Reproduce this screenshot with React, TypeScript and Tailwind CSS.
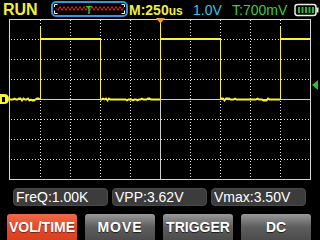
import React from "react";

function rng(seed: number) {
  let s = seed;
  return () => {
    s = (s * 1103515245 + 12345) & 0x7fffffff;
    return s / 0x7fffffff;
  };
}

function noisy(x0: number, x1: number, seed: number) {
  const r = rng(seed);
  const pts: string[] = [];
  for (let x = x0; x <= x1; x += 1.5) {
    const v = r();
    let y = 99.5;
    if (v > 0.8) y = 98.5;
    else if (v < 0.15) y = 100.5;
    pts.push(`${x.toFixed(1)},${y}`);
  }
  return pts.join(" ");
}

function Scope() {
  const Y = "#f8f238";
  const vx = [40, 70, 100, 130, 190, 220, 250, 280];
  const hy = [39, 59, 79, 119, 139, 159];
  return (
    <svg width="320" height="166" viewBox="0 18 320 166" className="block">
      {vx.map((x) => (
        <line key={"v" + x} x1={x + 0.5} y1={20} x2={x + 0.5} y2={179} stroke="#e6e6e6" strokeDasharray="1 2" />
      ))}
      {hy.map((y) => (
        <line key={"h" + y} x1={11} y1={y + 0.5} x2={310} y2={y + 0.5} stroke="#e6e6e6" strokeDasharray="1 2" />
      ))}
      <line x1={160.5} y1={20} x2={160.5} y2={179} stroke="#cfcfcf" />
      <line x1={10} y1={99.5} x2={311} y2={99.5} stroke="#cfcfcf" />
      <rect x={9.5} y={19.5} width={301} height={160} fill="none" stroke="#d6d6d6" />

      {/* trace */}
      <polyline points={noisy(10, 40, 7)} fill="none" stroke={Y} strokeWidth={1.8} />
      <polyline points={noisy(100, 160, 19)} fill="none" stroke={Y} strokeWidth={1.8} />
      <polyline points={noisy(220, 280, 33)} fill="none" stroke={Y} strokeWidth={1.8} />
      <line x1={40} y1={39} x2={100} y2={39} stroke={Y} strokeWidth={2} />
      <line x1={160} y1={39} x2={220} y2={39} stroke={Y} strokeWidth={2} />
      <line x1={280} y1={39} x2={310} y2={39} stroke={Y} strokeWidth={2} />
      <line x1={40.5} y1={27} x2={40.5} y2={100} stroke={Y} />
      <line x1={100.5} y1={38} x2={100.5} y2={100} stroke={Y} />
      <line x1={160.5} y1={22} x2={160.5} y2={100} stroke={Y} />
      <line x1={220.5} y1={38} x2={220.5} y2={100} stroke={Y} />
      <line x1={280.5} y1={27} x2={280.5} y2={100} stroke={Y} />

      {/* trigger marker */}
      <polygon points="156,18 165,18 160.5,23.5" fill="#f0a030" />
      {/* channel marker */}
      <path d="M0 94 H4 Q9 94 9 99 Q9 104 4 104 H0 Z" fill={Y} />
      <rect x={2} y={97} width={3} height={5} fill="#000" />
      {/* trigger level marker */}
      <polygon points="312,85 318,80 318,90" fill="#2fc02f" />
    </svg>
  );
}

function TimebaseBox() {
  let d = "M3 5.5";
  for (let x = 3; x < 70; x += 4) {
    d += ` L${x + 2} 7.5 L${x + 4} 3.5`;
  }
  return (
    <div className="w-[77px] h-[16px] rounded-[5px] border-2 border-[#3d93d6] bg-black">
      <svg width="73" height="12" viewBox="0 0 73 12" className="block">
        <path d={d} fill="none" stroke="#d42222" strokeWidth={1} />
        <path d="M1.5 4 V1.5 H4.5 M68.5 1.5 H71.5 V4 M1.5 7.5 V10.5 H4.5 M68.5 10.5 H71.5 V7.5" fill="none" stroke="#ffffff" strokeWidth={1} />
        <text x={36} y={10.5} textAnchor="middle" fill="#22d022" fontSize="10" fontWeight="bold" fontFamily="Liberation Sans, Arial, sans-serif">T</text>
      </svg>
    </div>
  );
}

function Battery() {
  return (
    <svg width="25" height="14" viewBox="0 0 25 14" className="block mt-[1px]">
      <rect x={1} y={1.5} width={21} height={11} rx={2.5} fill="none" stroke="#e8f0e0" strokeWidth={1.5} />
      <rect x={22.5} y={4.5} width={2} height={5} fill="#e8f0e0" />
      {[4, 7.5, 11, 14.5, 18].map((x) => (
        <rect key={x} x={x} y={4} width={2} height={6} fill="#22b83a" />
      ))}
    </svg>
  );
}

export default function App() {
  return (
    <div className="w-[320px] h-[240px] bg-black overflow-hidden font-['Liberation_Sans',Arial,sans-serif] flex flex-col">
      {/* header */}
      <div className="h-[18px] flex items-center">
        <div className="ml-[3px] mt-[2px] w-[48px] text-[16px] leading-none font-bold text-[#f2ee3a]">RUN</div>
        <TimebaseBox />
        <div className="ml-[1px] mt-[2px] w-[64px] text-[14px] leading-none font-bold text-[#f2ee3a] whitespace-nowrap">
          M:250<span className="text-[12px]">us</span>
        </div>
        <div className="mt-[2px] w-[39px] text-[14px] leading-none text-[#38c4ea] whitespace-nowrap">1.0V</div>
        <div className="mt-[2px] w-[62px] text-[14px] leading-none text-[#3ccc3c] whitespace-nowrap">T:700mV</div>
        <Battery />
      </div>

      <Scope />

      {/* measurements */}
      <div className="mt-[4px] ml-[13px] flex gap-[4px]">
        {["FreQ:1.00K", "VPP:3.62V", "Vmax:3.50V"].map((t) => (
          <div
            key={t}
            className="w-[95px] h-[18px] rounded-[4px] bg-[#3c3c3c] border border-[#4a4a4a] text-white text-[14px] leading-none flex items-center pl-[2px] whitespace-nowrap"
          >
            {t}
          </div>
        ))}
      </div>

      {/* buttons */}
      <div className="mt-[8px] ml-[7px] flex gap-[8px]">
        <div className="w-[70px] h-[26px] rounded-t-[3px] bg-gradient-to-b from-[#f06a48] via-[#e44a2a] to-[#d8401f] text-white text-[14px] font-bold flex items-center justify-center [text-shadow:0_1px_1px_rgba(0,0,0,0.5)]">
          VOL/TIME
        </div>
        {["MOVE", "TRIGGER", "DC"].map((t) => (
          <div
            key={t}
            className={
              "w-[70px] h-[26px] rounded-t-[3px] bg-gradient-to-b from-[#9a9a9a] via-[#5e5e5e] to-[#4c4c4c] text-white text-[14px] font-bold flex items-center justify-center [text-shadow:0_1px_1px_rgba(0,0,0,0.7)] " +
              (t === "MOVE" ? "tracking-[1px]" : "")
            }
          >
            {t}
          </div>
        ))}
      </div>
    </div>
  );
}
